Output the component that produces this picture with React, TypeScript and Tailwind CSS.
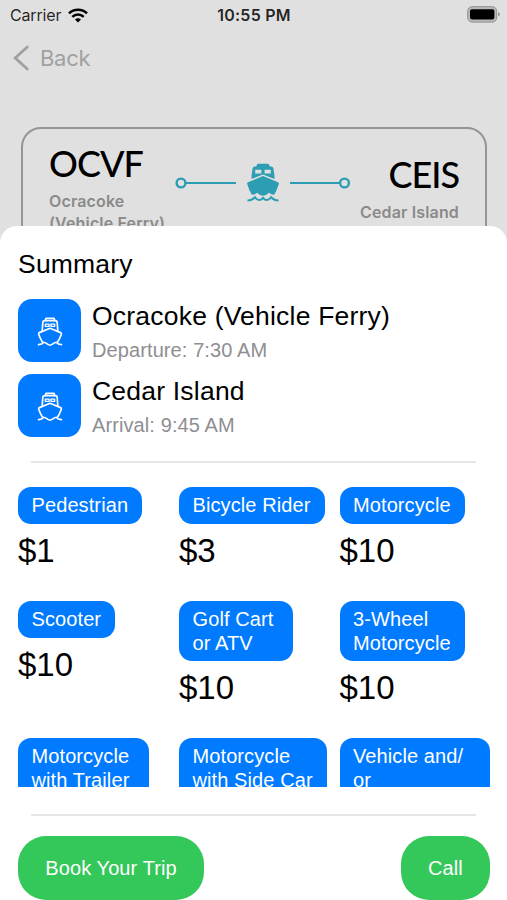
import type { ReactNode } from "react";

type Stop = { name: string; detail: string };
type Fare = { label: string[]; price?: string; width: string };

const stops: Stop[] = [
  { name: "Ocracoke (Vehicle Ferry)", detail: "Departure: 7:30 AM" },
  { name: "Cedar Island", detail: "Arrival: 9:45 AM" },
];

const fareRows: { height: string; fares: Fare[] }[] = [
  {
    height: "h-[114px]",
    fares: [
      { label: ["Pedestrian"], price: "$1", width: "w-[124px]" },
      { label: ["Bicycle Rider"], price: "$3", width: "w-[146px]" },
      { label: ["Motorcycle"], price: "$10", width: "w-[125.500px]" },
    ],
  },
  {
    height: "h-[137px]",
    fares: [
      { label: ["Scooter"], price: "$10", width: "w-[97px]" },
      { label: ["Golf Cart", "or ATV"], price: "$10", width: "w-[114px]" },
      { label: ["3-Wheel", "Motorcycle"], price: "$10", width: "w-[125.500px]" },
    ],
  },
  {
    height: "h-[137px]",
    fares: [
      { label: ["Motorcycle", "with Trailer"], width: "w-[131px]" },
      { label: ["Motorcycle", "with Side Car"], width: "w-[148px]" },
      { label: ["Vehicle and/", "or"], width: "w-[150.500px]" },
    ],
  },
];

function StatusBar() {
  return (
    <div className="flex h-[30px] items-center justify-between pr-[7px] pl-[10px] text-black/85">
      <div className="flex w-[206px] items-center gap-[7px]">
        <span className="w-[51px] text-[16px] tracking-[-0.15px] whitespace-nowrap">Carrier</span>
        <svg width="20" height="15" viewBox="0 0 20 15" fill="none" stroke="#000" strokeWidth="2.6">
          <path d="M1 5.4a12.8 12.8 0 0 1 18 0" />
          <path d="M4.3 8.9a8.1 8.1 0 0 1 11.4 0" />
          <path d="M10 14.6 7 11.6a4.2 4.2 0 0 1 6 0z" fill="#000" stroke="none" />
        </svg>
      </div>
      <span className="text-[16px] font-semibold tracking-[0.25px] whitespace-nowrap">10:55 PM</span>
      <div className="flex w-[208px] justify-end">
        <svg className="mb-[2px]" width="33" height="17" viewBox="0 0 33 17">
          <rect x="0.7" y="0.7" width="29" height="15.4" rx="4.5" fill="#b9b9b9" stroke="#8f8f8f" />
          <rect x="3" y="3.2" width="24.4" height="10.2" rx="1.8" fill="#000" />
          <path d="M31 6.2q2 .4 2 2t-2 2z" fill="#999" />
        </svg>
      </div>
    </div>
  );
}

function RouteLine() {
  return (
    <svg className="mt-[33px] shrink-0" width="176" height="42" viewBox="0 0 176 42" fill="none">
      <g stroke="#2d9db3">
        <circle cx="6" cy="21" r="4.4" strokeWidth="2.4" />
        <circle cx="169.5" cy="21" r="4.4" strokeWidth="2.4" />
        <path d="M11 21H61M115 21H164" strokeWidth="1.8" />
      </g>
      <g fill="#2d9db3">
        <path
          fillRule="evenodd"
          d="M76.5 13.6 77.600 6.400q.4-1.800 2.200-1.800h1.400l.7-1.900q.3-.9 1.300-.9h9.600q1 0 1.300.9l.7 1.900h1.400q1.800 0 2.200 1.800l1.100 7.200V17L88 12.400 76.500 17zM80.200 7.800v3.800h6.200V7.800zM89.600 7.800v3.800h6.200V7.800z"
        />
        <path d="M88 14 103 20.3q1.2.6.8 1.8-1.8 6.3-4.6 10.6-2.7.2-5.3-2Q88 37 82.100 30.700q-2.600 2.200-5.300 2Q74 28.400 72.200 22.100q-.400-1.200.8-1.800z" />
      </g>
      <path
        d="M72.500 38.400q4.400 0 7.500-3.200 1.800 2.800 4 2.800t4-2.200q1.800 2.200 4 2.200t4-2.800q3.100 3.200 7.500 3.200"
        stroke="#2d9db3"
        strokeWidth="2"
      />
    </svg>
  );
}

function FerryIcon() {
  return (
    <svg
      className="mt-[2px]"
      width="26"
      height="30"
      viewBox="0 0 26 30"
      fill="none"
      stroke="#fff"
      strokeWidth="1.7"
      strokeLinejoin="round"
      strokeLinecap="round"
    >
      <path d="M5.200 13.700 5.800 5.600q.1-1.900 2-1.900H18.200q1.900 0 2 1.900l.6 8.100" />
      <path d="M8.300 3.600 9 1.300h8l.7 2.300" />
      <path d="M8.300 7.200h3.800v2.100H8.300zM13.900 7.200h3.800v2.100h-3.800z" strokeWidth="1.300" />
      <path d="M5.200 24.700Q2.900 20.900 1.700 17.200q-.3-1.100.7-1.600L13 11.300l10.600 4.300q1 .5.700 1.600-1.200 3.700-3.500 7.500" />
      <path d="M1.500 27.600q3.400.1 5.200-2.300 2.700.7 4.200 2.100 2.100 1.300 4.200 0 1.500-1.400 4.200-2.100 1.800 2.400 5.200 2.300" />
    </svg>
  );
}

function Terminal({ code, name, className }: { code: string; name: string[]; className: string }) {
  return (
    <div className={className}>
      <div className="font-[Lato,sans-serif] text-[36px] leading-[44px] font-medium tracking-[-1px] text-black">{code}</div>
      <div className="mt-[6px] text-[16px] leading-[21.500px] font-semibold tracking-[0.15px] whitespace-nowrap text-[#8a8a8a]">
        {name.map((line) => (
          <div key={line}>{line}</div>
        ))}
      </div>
    </div>
  );
}

function Header() {
  return (
    <div className="h-[226px] overflow-hidden bg-[#e0e0e0] font-[Inter,sans-serif]">
      <StatusBar />
      <div className="flex h-[56px] items-center gap-[10px] pl-[13px] text-[#a0a0a0]">
        <svg width="17" height="26" viewBox="0 0 17 26" fill="none" stroke="currentColor" strokeWidth="2.8" strokeLinecap="round">
          <path d="M14.300 2 2.200 13l12.100 11" />
        </svg>
        <span className="text-[22px] tracking-[-0.3px]">Back</span>
      </div>
      <div className="mr-[20px] ml-[21px] mt-[41px] flex h-[180px] rounded-[20px] border-2 border-[#959595] pr-[26px] pl-[26px]">
        <Terminal code="OCVF" name={["Ocracoke", "(Vehicle Ferry)"]} className="w-[126px] shrink-0 pt-[12px]" />
        <RouteLine />
        <Terminal code="CEIS" name={["Cedar Island"]} className="flex-1 pt-[23px] text-right" />
      </div>
    </div>
  );
}

function FareCell({ label, price, width }: Fare) {
  return (
    <div>
      <div
        className={`rounded-[13px] bg-[#007aff] pt-[7px] pb-[6px] pl-[13.500px] text-[20px] leading-[23.700px] tracking-[0.1px] whitespace-nowrap text-white ${width}`}
      >
        {label.map((line) => (
          <div key={line}>{line}</div>
        ))}
      </div>
      {price && <div className="mt-[7px] text-[33px] leading-[40px] text-black">{price}</div>}
    </div>
  );
}

function ActionButton({ children, className }: { children: ReactNode; className: string }) {
  return (
    <button className={`h-[64px] rounded-[28px] bg-[#34c759] text-[20px] tracking-[0.1px] text-white ${className}`}>
      {children}
    </button>
  );
}

export default function App() {
  return (
    <div className="h-[900px] w-[507px] overflow-hidden bg-[#e0e0e0]">
      <Header />

      {/* Bottom sheet */}
      <div className="flex h-[674px] flex-col rounded-t-[17px] bg-white pt-[22px] font-['Liberation_Sans',sans-serif]">
        <h1 className="pl-[18px] text-[26.500px] leading-[32px] tracking-[0.2px] text-black">Summary</h1>

        <div className="mt-[19px] flex flex-col gap-[12px] pl-[18px]">
          {stops.map((stop) => (
            <div key={stop.name} className="flex gap-[11px]">
              <div className="flex size-[63px] items-center justify-center rounded-[14px] bg-[#007aff]">
                <FerryIcon />
              </div>
              <div className="pt-px">
                <div className="text-[26.500px] leading-[32px] tracking-[0.21px] text-black">{stop.name}</div>
                <div className="mt-[6px] text-[20px] leading-[24px] tracking-[0.1px] text-[#8e8e93]">{stop.detail}</div>
              </div>
            </div>
          ))}
        </div>

        <div className="mt-[24px] mr-[31px] ml-[31px] h-[2px] shrink-0 bg-[#e6e6e6]" />

        {/* Fare list, cut off where it scrolls */}
        <div className="mt-[24px] h-[300px] shrink-0 overflow-hidden pl-[18px]">
          {fareRows.map((row, i) => (
            <div key={i} className={`grid grid-cols-[161px_160.500px_151px] ${row.height}`}>
              {row.fares.map((fare) => (
                <FareCell key={fare.label.join(" ")} {...fare} />
              ))}
            </div>
          ))}
        </div>

        <div className="mt-[27px] mr-[31px] ml-[31px] h-[2px] shrink-0 bg-[#e6e6e6]" />

        <div className="mt-[20px] flex justify-between pr-[17px] pl-[18px]">
          <ActionButton className="w-[186px]">Book Your Trip</ActionButton>
          <ActionButton className="w-[89px]">Call</ActionButton>
        </div>
      </div>
    </div>
  );
}
